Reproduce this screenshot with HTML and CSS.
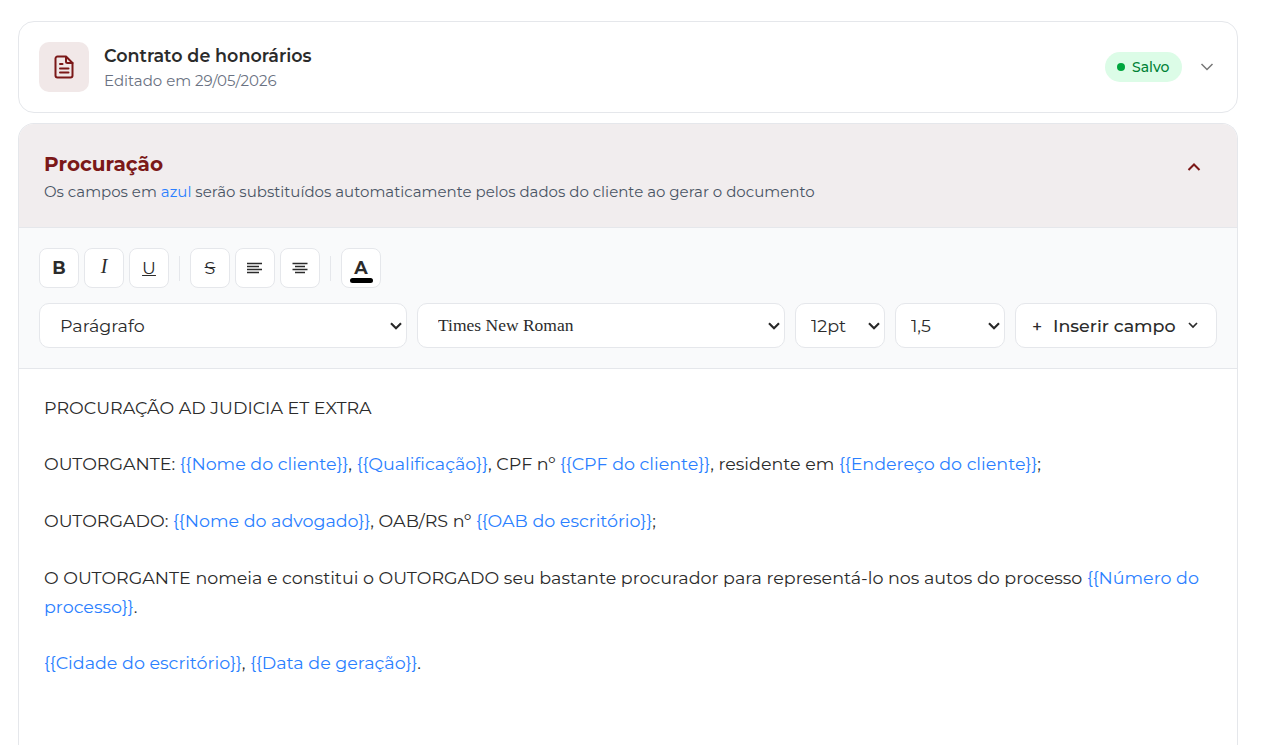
FILE: index.html
```html
<!DOCTYPE html>
<html lang="pt-BR">
<head>
    <meta charset="UTF-8">
    <meta name="viewport" content="width=device-width, initial-scale=1.0">
    <title>Modelos de documentos</title>
    <link rel="stylesheet" href="styles.css">
</head>
<body>
    <div class="card">
        <div class="card-icon">
            <svg width="20" height="24" viewBox="0 0 20 24" fill="none" stroke="currentColor" stroke-width="2" stroke-linecap="round" stroke-linejoin="round">
                <path d="M12 1.500H3.500a2 2 0 0 0-2 2v17a2 2 0 0 0 2 2h13a2 2 0 0 0 2-2V8z"/>
                <path d="M12 2v4.500a1.500 1.500 0 0 0 1.500 1.500h5"/>
                <path d="M6 9h2.500M6 13.500h8.500M6 17.500h8.500"/>
            </svg>
        </div>
        <div class="card-info">
            <div class="card-title">Contrato de honorários</div>
            <div class="card-date">Editado em 29/05/2026</div>
        </div>
        <span class="badge"><i class="dot"></i>Salvo</span>
        <svg class="chevron" width="14" height="8" viewBox="0 0 14 8" fill="none" stroke="currentColor" stroke-width="1.5"><path d="M1.500 1l5.500 5.500L12.500 1"/></svg>
    </div>

    <div class="editor">
        <div class="editor-header">
            <div>
                <h2>Procuração</h2>
                <p class="hint">Os campos em <span class="field">azul</span> serão substituídos automaticamente pelos dados do cliente ao gerar o documento</p>
            </div>
            <svg class="chevron-up" width="14" height="8" viewBox="0 0 14 8" fill="none" stroke="currentColor" stroke-width="2"><path d="M1.500 7L7 1.500 12.500 7"/></svg>
        </div>

        <div class="toolbar">
            <div class="tools">
                <button class="tool bold">B</button>
                <button class="tool italic">I</button>
                <button class="tool underline">U</button>
                <span class="sep"></span>
                <button class="tool strike">S</button>
                <button class="tool"><svg width="16" height="12" viewBox="0 0 16 12" stroke="currentColor" stroke-width="1.300"><path d="M0 1.500h15M0 4.500h12M0 7.500h15M0 10.500h12"/></svg></button>
                <button class="tool"><svg width="16" height="12" viewBox="0 0 16 12" stroke="currentColor" stroke-width="1.300"><path d="M0.500 1.500h15M3 4.500h10M0.500 7.500h15M3 10.500h10"/></svg></button>
                <span class="sep"></span>
                <button class="tool color">A<i class="color-bar"></i></button>
            </div>
            <div class="selects">
                <select class="select wide"><option>Parágrafo</option></select>
                <select class="select wide times"><option>Times New Roman</option></select>
                <select class="select size"><option>12pt</option></select>
                <select class="select spacing"><option>1,5</option></select>
                <button class="insert">
                    <span class="plus">+</span>
                    <span class="insert-label">Inserir campo</span>
                    <svg width="10" height="7" viewBox="0 0 10 7" fill="none" stroke="currentColor" stroke-width="1.700"><path d="M1 1l4 4 4-4"/></svg>
                </button>
            </div>
        </div>

        <div class="content">
            <p>PROCURAÇÃO AD JUDICIA ET EXTRA</p>
            <p>OUTORGANTE: <span class="field">{{Nome do cliente}}</span>, <span class="field">{{Qualificação}}</span>, CPF nº <span class="field">{{CPF do cliente}}</span>, residente em <span class="field">{{Endereço do cliente}}</span>;</p>
            <p>OUTORGADO: <span class="field">{{Nome do advogado}}</span>, OAB/RS nº <span class="field">{{OAB do escritório}}</span>;</p>
            <p>O OUTORGANTE nomeia e constitui o OUTORGADO seu bastante procurador para representá-lo nos autos do processo <span class="field">{{Número do processo}}</span>.</p>
            <p><span class="field">{{Cidade do escritório}}</span>, <span class="field">{{Data de geração}}</span>.</p>
        </div>
    </div>
</body>
</html>
```
FILE: styles.css
```css
* {
    box-sizing: border-box;
}

body {
    margin: 0;
    padding: 21px 27px 0 18px;
    height: 745px;
    display: flex;
    flex-direction: column;
    gap: 10px;
    background: #fff;
    color: #2b2b2b;
    font-family: Montserrat, "Open Sans", sans-serif;
}

p,
h2 {
    margin: 0;
}

button,
select {
    font-family: inherit;
    color: inherit;
}

.card {
    display: flex;
    align-items: center;
    flex: none;
    height: 92px;
    padding: 0 23px 0 20px;
    border: 1px solid #e5e7eb;
    border-radius: 16px;
}

.card-icon {
    display: flex;
    align-items: center;
    justify-content: center;
    width: 50px;
    height: 50px;
    margin-right: 15px;
    padding-right: 1px;
    border-radius: 10px;
    background: #f1e8e8;
    color: #7b1818;
}

.card-info {
    flex: 1;
}

.card-title {
    font-size: 17.5px;
    font-weight: 600;
    line-height: 26px;
}

.card-date {
    font-size: 15px;
    line-height: 23px;
    color: #6a7282;
}

.badge {
    display: flex;
    align-items: center;
    gap: 7px;
    height: 30px;
    width: 77px;
    padding-left: 12px;
    margin-right: 18px;
    border-radius: 15px;
    background: #dcfce7;
    color: #008236;
    font-size: 14px;
    font-weight: 500;
}

.dot {
    width: 8px;
    height: 8px;
    border-radius: 50%;
    background: #00a63e;
}

.chevron {
    color: #777;
}

.editor {
    flex: 1;
    border: 1px solid #e5e7eb;
    border-bottom: 0;
    border-radius: 16px 16px 0 0;
    overflow: hidden;
}

.editor-header {
    display: flex;
    justify-content: space-between;
    height: 104px;
    padding: 26px 36px 0 25px;
    background: #f1edee;
    border-bottom: 1px solid #e5e7eb;
}

.editor-header h2 {
    font-size: 20px;
    line-height: 28px;
    color: #7b1818;
}

.hint {
    font-size: 15px;
    line-height: 28px;
    color: #4a5565;
}

.field {
    color: #2b7fff;
}

.chevron-up {
    margin-top: 13px;
    color: #7b1818;
}

.toolbar {
    height: 141px;
    padding: 20px;
    background: #f9fafb;
    border-bottom: 1px solid #e5e7eb;
}

.tools {
    display: flex;
    align-items: center;
    gap: 5px;
    margin-bottom: 15px;
}

.tool {
    display: flex;
    align-items: center;
    justify-content: center;
    width: 40px;
    height: 40px;
    padding: 0 0 1px;
    border: 1px solid #e5e7eb;
    border-radius: 8px;
    background: #fff;
    font-size: 17.5px;
}

.bold {
    font-weight: 700;
}

.italic {
    font-family: "Liberation Serif", serif;
    font-style: italic;
    font-size: 20px;
    padding-bottom: 3px;
}

.underline {
    text-decoration: underline;
}

.strike {
    text-decoration: line-through;
}

.color {
    flex-direction: column;
    font-weight: 700;
    line-height: 20px;
    padding-top: 5px;
}

.color-bar {
    width: 23px;
    height: 5px;
    border-radius: 3px;
    background: #000;
}

.sep {
    width: 1px;
    height: 25px;
    margin: 0 5px;
    background: #e5e7eb;
}

.selects {
    display: flex;
    gap: 10px;
}

.select {
    appearance: none;
    height: 45px;
    border: 1px solid #e5e7eb;
    border-radius: 10px;
    background: #fff url("data:image/svg+xml,%3Csvg xmlns='http://www.w3.org/2000/svg' width='12' height='8' viewBox='0 0 12 8' fill='none' stroke='%232b2b2b' stroke-width='2.2'%3E%3Cpath d='M1 1.200l5 5 5-5'/%3E%3C/svg%3E") no-repeat right 4px center;
    font-size: 17.5px;
    padding: 0 20px;
}

.wide {
    width: 368px;
}

.times {
    font-family: "Liberation Serif", serif;
    padding-bottom: 2px;
}

.size {
    width: 90px;
    padding-left: 15px;
}

.spacing {
    width: 110px;
    padding-left: 15px;
}

.insert {
    display: flex;
    align-items: center;
    width: 202px;
    height: 45px;
    padding: 0 18px 0 16px;
    border: 1px solid #e5e7eb;
    border-radius: 10px;
    background: #fff;
    font-size: 17.5px;
    font-weight: 500;
}

.plus {
    width: 21px;
    padding-bottom: 1px;
    text-align: left;
}

.insert-label {
    flex: 1;
    text-align: left;
}

.content {
    padding: 23.9px 25px;
    font-size: 17.5px;
    line-height: 29px;
}

.content p {
    margin-bottom: 27.57px;
}
```
